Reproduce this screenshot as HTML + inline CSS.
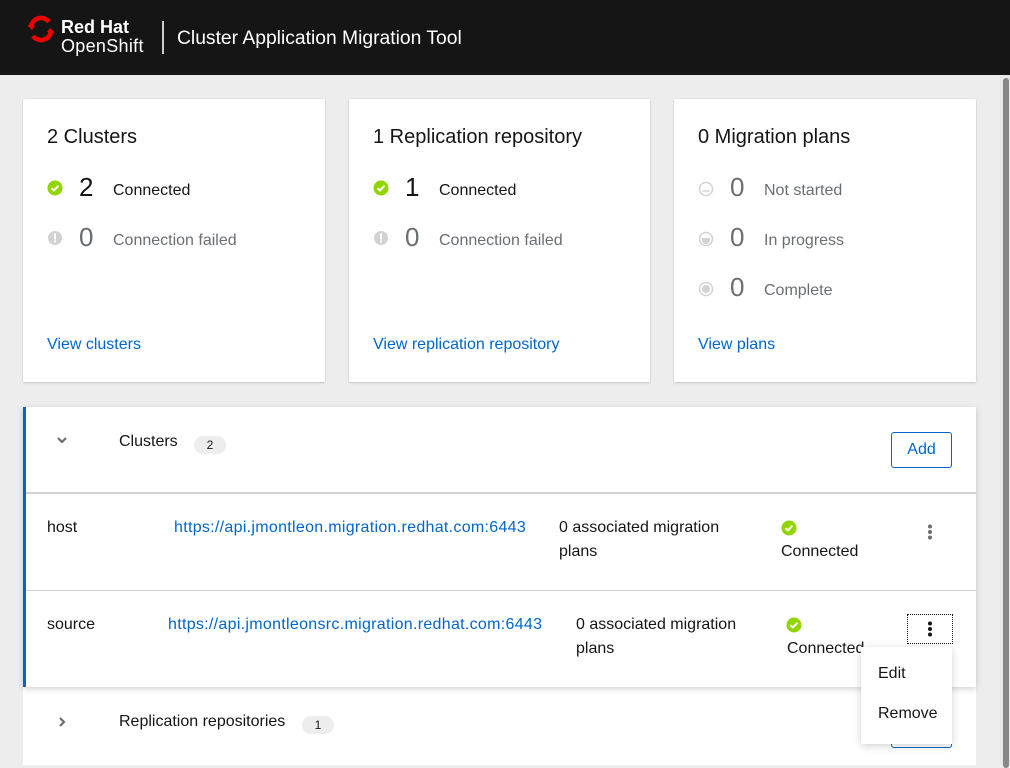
<!DOCTYPE html>
<html><head><meta charset="utf-8"><style>
*{box-sizing:border-box;margin:0;padding:0}
body{width:1010px;height:765px;overflow:hidden;background:#ededed;font-family:"Liberation Sans",sans-serif;color:#151515;position:relative;font-size:16px;line-height:1.4}
.a{position:absolute;white-space:nowrap}
.card{position:absolute;top:99px;height:283px;background:#fff;box-shadow:0 1px 2px rgba(0,0,0,.15),0 0 2px rgba(0,0,0,.08)}
.title{position:absolute;left:24px;top:24px;font-size:20px}
.num{position:absolute;font-size:26px;font-weight:300}
.lbl{position:absolute;font-size:16px}
.link{position:absolute;left:24px;top:235px;color:#06c;font-size:16px}
.g{color:#6a6e73}
.blue{color:#06c}
.url{letter-spacing:.3px}
</style></head><body>
<div class="a" style="left:0;top:0;width:1010px;height:75px;background:#151515"></div>
<svg class="a" style="left:26px;top:14px" width="30" height="30" viewBox="0 0 30 30"><path d="M5 13 A10 10 0 0 1 23 8" stroke="#e00" stroke-width="4.5" fill="none"/><path d="M25 17 A10 10 0 0 1 7 22" stroke="#e00" stroke-width="4.5" fill="none"/><path d="M1 11 L9 12 L6 16Z M29 19 L21 18 L24 14Z" fill="#e00"/></svg>
<div class="a" style="left:61px;top:18px;color:#fff;font-weight:bold;font-size:18px;line-height:18px">Red Hat</div>
<div class="a" style="left:61px;top:37px;color:#fff;font-size:18px;line-height:18px;letter-spacing:.3px">OpenShift</div>
<div class="a" style="left:162px;top:21px;width:2px;height:33px;background:#ccc"></div>
<div class="a" style="left:177px;top:25px;color:#fff;font-size:19.3px">Cluster Application Migration Tool</div>
<div class="a" style="left:1000px;top:75px;width:10px;height:690px;background:#e8e8e8"></div>
<div class="a" style="left:1003px;top:78px;width:6px;height:690px;background:#888;border-radius:3px"></div>

<div class="card" style="left:23px;width:302px">
<div class="title">2 Clusters</div>
<svg class="a" style="left:24px;top:81px" width="16" height="16"><circle cx="8" cy="8" r="7.5" fill="#92d400"/><path d="M4.5 8.2l2.4 2.3 4.6-4.8" stroke="#fff" stroke-width="2" fill="none"/></svg>
<div class="num" style="left:56px;top:70px">2</div><div class="lbl" style="left:90px;top:81px">Connected</div>
<svg class="a" style="left:24px;top:131px" width="16" height="16"><circle cx="8" cy="8" r="7" fill="#d2d2d2"/><rect x="7" y="3.5" width="2" height="6" fill="#fff"/><rect x="7" y="10.5" width="2" height="2" fill="#fff"/></svg>
<div class="num g" style="left:56px;top:120px">0</div><div class="lbl g" style="left:90px;top:131px">Connection failed</div>
<div class="link">View clusters</div></div>

<div class="card" style="left:349px;width:301px">
<div class="title">1 Replication repository</div>
<svg class="a" style="left:24px;top:81px" width="16" height="16"><circle cx="8" cy="8" r="7.5" fill="#92d400"/><path d="M4.5 8.2l2.4 2.3 4.6-4.8" stroke="#fff" stroke-width="2" fill="none"/></svg>
<div class="num" style="left:56px;top:70px">1</div><div class="lbl" style="left:90px;top:81px">Connected</div>
<svg class="a" style="left:24px;top:131px" width="16" height="16"><circle cx="8" cy="8" r="7" fill="#d2d2d2"/><rect x="7" y="3.5" width="2" height="6" fill="#fff"/><rect x="7" y="10.5" width="2" height="2" fill="#fff"/></svg>
<div class="num g" style="left:56px;top:120px">0</div><div class="lbl g" style="left:90px;top:131px">Connection failed</div>
<div class="link">View replication repository</div></div>

<div class="card" style="left:674px;width:302px">
<div class="title">0 Migration plans</div>
<svg class="a" style="left:24px;top:82px" width="16" height="16"><circle cx="8" cy="8" r="6.5" fill="none" stroke="#d2d2d2" stroke-width="1.5"/><path d="M4.5 10h7" stroke="#d2d2d2" stroke-width="1.5"/></svg>
<div class="num g" style="left:56px;top:70px">0</div><div class="lbl g" style="left:90px;top:81px">Not started</div>
<svg class="a" style="left:24px;top:132px" width="16" height="16"><circle cx="8" cy="8" r="6.5" fill="none" stroke="#d2d2d2" stroke-width="1.5"/><path d="M4 7h8v2a4 4 0 0 1-8 0z" fill="#d2d2d2"/></svg>
<div class="num g" style="left:56px;top:120px">0</div><div class="lbl g" style="left:90px;top:131px">In progress</div>
<svg class="a" style="left:24px;top:182px" width="16" height="16"><circle cx="8" cy="8" r="6.5" fill="none" stroke="#d2d2d2" stroke-width="1.5"/><circle cx="8" cy="8" r="4" fill="#d2d2d2"/></svg>
<div class="num g" style="left:56px;top:170px">0</div><div class="lbl g" style="left:90px;top:181px">Complete</div>
<div class="link">View plans</div></div>

<div class="a" style="left:23px;top:407px;width:953px;height:358px;background:#fff"></div>
<div class="a" style="left:23px;top:407px;width:953px;height:280px;background:#fff;box-shadow:0 2px 6px rgba(0,0,0,.18)"></div>
<div class="a" style="left:23px;top:407px;width:3px;height:280px;background:#06c"></div>
<svg class="a" style="left:56px;top:436px" width="12" height="10"><path d="M2 2l4 4 4-4" stroke="#6a6e73" stroke-width="2.2" fill="none"/></svg>
<div class="a" style="left:119px;top:431px">Clusters</div>
<div class="a" style="left:194px;top:436px;width:32px;height:18px;border-radius:9px;background:#ededed;font-size:12px;text-align:center;line-height:18px">2</div>
<div class="a blue" style="left:891px;top:432px;width:61px;height:36px;border:1px solid #06c;border-radius:3px;text-align:center;line-height:34px">Add</div>
<div class="a" style="left:26px;top:492px;width:950px;height:2px;background:#d2d2d2"></div>
<div class="a" style="left:26px;top:590px;width:950px;height:1px;background:#d2d2d2"></div>

<div class="a" style="left:47px;top:517px">host</div>
<div class="a blue url" style="left:174px;top:517px">https://api.jmontleon.migration.redhat.com:6443</div>
<div class="a" style="left:559px;top:516px;line-height:24px;white-space:normal;width:180px">0 associated migration plans</div>
<svg class="a" style="left:781px;top:520px" width="16" height="16"><circle cx="8" cy="8" r="7.5" fill="#92d400"/><path d="M4.5 8.2l2.4 2.3 4.6-4.8" stroke="#fff" stroke-width="2" fill="none"/></svg>
<div class="a" style="left:781px;top:541px">Connected</div>
<svg class="a" style="left:926px;top:524px" width="8" height="16"><circle cx="4" cy="2.5" r="2" fill="#6a6e73"/><circle cx="4" cy="8" r="2" fill="#6a6e73"/><circle cx="4" cy="13.5" r="2" fill="#6a6e73"/></svg>

<div class="a" style="left:47px;top:614px">source</div>
<div class="a blue url" style="left:168px;top:614px">https://api.jmontleonsrc.migration.redhat.com:6443</div>
<div class="a" style="left:576px;top:613px;line-height:24px;white-space:normal;width:180px">0 associated migration plans</div>
<svg class="a" style="left:786px;top:617px" width="16" height="16"><circle cx="8" cy="8" r="7.5" fill="#92d400"/><path d="M4.5 8.2l2.4 2.3 4.6-4.8" stroke="#fff" stroke-width="2" fill="none"/></svg>
<div class="a" style="left:787px;top:638px">Connected</div>
<div class="a" style="left:907px;top:614px;width:46px;height:30px;border:1px dotted #151515"></div>
<svg class="a" style="left:926px;top:621px" width="8" height="16"><circle cx="4" cy="2.5" r="2" fill="#151515"/><circle cx="4" cy="8" r="2" fill="#151515"/><circle cx="4" cy="13.5" r="2" fill="#151515"/></svg>

<svg class="a" style="left:58px;top:716px" width="10" height="12"><path d="M2 2l4 4-4 4" stroke="#6a6e73" stroke-width="2.2" fill="none"/></svg>
<div class="a" style="left:119px;top:711px">Replication repositories</div>
<div class="a" style="left:302px;top:716px;width:32px;height:18px;border-radius:9px;background:#ededed;font-size:12px;text-align:center;line-height:18px">1</div>
<div class="a" style="left:891px;top:712px;width:61px;height:36px;border:1px solid #06c;border-radius:3px"></div>

<div class="a" style="left:861px;top:647px;width:91px;height:97px;background:#fff;box-shadow:0 2px 8px rgba(0,0,0,.18)"></div>
<div class="a" style="left:878px;top:663px">Edit</div>
<div class="a" style="left:878px;top:703px">Remove</div>
</body></html>
